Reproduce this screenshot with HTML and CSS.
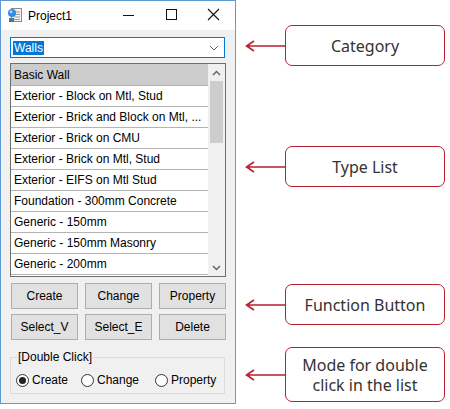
FILE: index.html
```html
<!DOCTYPE html>
<html lang="en">
<head>
  <meta charset="UTF-8">
  <title>Project1 - Type Manager</title>
  <link rel="stylesheet" href="styles.css">
</head>
<body>
  <div class="page">
    <!-- Dialog window -->
    <div class="window">
      <div class="titlebar">
        <svg class="app-icon" width="16" height="16" viewBox="0 0 16 16">
          <rect x="4.5" y="1.5" width="10" height="13" fill="#f4f4f4" stroke="#8a8a8a"/>
          <path d="M7 5h6M7 7.5h6M7 10h6M7 12.5h6" stroke="#9a9a9a"/>
          <circle cx="5" cy="6" r="4" fill="#2f8be0"/>
          <circle cx="4" cy="4.8" r="1.6" fill="#9fd3ff"/>
          <path d="M2 11h5v4H2z" fill="#5b6f86"/>
        </svg>
        <span class="title">Project1</span>
        <div class="caption">
          <svg width="46" height="29" viewBox="0 0 46 29"><path d="M18 15.5h11" stroke="#111"/></svg>
          <svg width="42" height="29" viewBox="0 0 42 29"><rect x="15.5" y="9.5" width="10" height="10" fill="none" stroke="#111"/></svg>
          <svg width="42" height="29" viewBox="0 0 42 29"><path d="M15 9l11 11M26 9L15 20" stroke="#111" stroke-width="1.1"/></svg>
        </div>
      </div>

      <div class="client">
        <div class="combo">
          <span class="combo-value">Walls</span>
          <svg class="chevron" width="10" height="6" viewBox="0 0 10 6"><path d="M1 1l4 4 4-4" fill="none" stroke="#606060"/></svg>
        </div>

        <div class="listbox">
          <ul class="items">
            <li class="item selected">Basic Wall</li>
            <li class="item">Exterior - Block on Mtl, Stud</li>
            <li class="item">Exterior - Brick and Block on Mtl, ...</li>
            <li class="item">Exterior - Brick on CMU</li>
            <li class="item">Exterior - Brick on Mtl, Stud</li>
            <li class="item">Exterior - EIFS on Mtl Stud</li>
            <li class="item">Foundation - 300mm Concrete</li>
            <li class="item">Generic - 150mm</li>
            <li class="item">Generic - 150mm Masonry</li>
            <li class="item">Generic - 200mm</li>
          </ul>
          <div class="scrollbar">
            <div class="arrow">
              <svg width="9" height="6" viewBox="0 0 9 6"><path d="M1 5l3.5-3.5L8 5" fill="none" stroke="#606060" stroke-width="1.4"/></svg>
            </div>
            <div class="track"><div class="thumb"></div></div>
            <div class="arrow">
              <svg width="9" height="6" viewBox="0 0 9 6"><path d="M1 1l3.5 3.5L8 1" fill="none" stroke="#606060" stroke-width="1.4"/></svg>
            </div>
          </div>
        </div>

        <div class="buttons">
          <button class="btn">Create</button>
          <button class="btn">Change</button>
          <button class="btn">Property</button>
          <button class="btn">Select_V</button>
          <button class="btn">Select_E</button>
          <button class="btn">Delete</button>
        </div>

        <fieldset class="group">
          <legend>[Double Click]</legend>
          <div class="radios">
            <label class="radio"><span class="dot checked"></span>Create</label>
            <label class="radio"><span class="dot"></span>Change</label>
            <label class="radio"><span class="dot"></span>Property</label>
          </div>
        </fieldset>
      </div>
    </div>

    <!-- Callouts -->
    <div class="notes">
      <div class="note note-category">
        <svg class="pointer" width="40" height="14" viewBox="0 0 40 14"><path d="M1 7h39M9 2L1.5 7 9 12" fill="none" stroke="#b8202e" stroke-width="1.6"/></svg>
        <div class="note-box">Category</div>
      </div>
      <div class="note note-types">
        <svg class="pointer" width="40" height="14" viewBox="0 0 40 14"><path d="M1 7h39M9 2L1.5 7 9 12" fill="none" stroke="#b8202e" stroke-width="1.6"/></svg>
        <div class="note-box">Type List</div>
      </div>
      <div class="note note-buttons">
        <svg class="pointer" width="40" height="14" viewBox="0 0 40 14"><path d="M1 7h39M9 2L1.5 7 9 12" fill="none" stroke="#b8202e" stroke-width="1.6"/></svg>
        <div class="note-box">Function Button</div>
      </div>
      <div class="note note-mode">
        <svg class="pointer" width="40" height="14" viewBox="0 0 40 14"><path d="M1 7h39M9 2L1.5 7 9 12" fill="none" stroke="#b8202e" stroke-width="1.6"/></svg>
        <div class="note-box">Mode for double<br>click in the list</div>
      </div>
    </div>
  </div>
</body>
</html>
```

FILE: styles.css
```css
body {
  margin: 0;
  background: #fff;
  font-family: "Liberation Sans", Arial, sans-serif;
  font-size: 12px;
  color: #000;
}
.page {
  display: flex;
  width: 450px;
  height: 409px;
  overflow: hidden;
}

/* window frame */
.window {
  width: 234px;
  height: 402px;
  border: 1px solid #5d9ad8;
  background: #f0f0f0;
  display: flex;
  flex-direction: column;
}
.titlebar {
  height: 29px;
  background: #fff;
  display: flex;
  align-items: center;
}
.app-icon {
  margin-left: 6px;
  margin-top: -1px;
}
.title {
  margin-left: 5px;
  font-size: 12px;
  color: #000;
}
.caption {
  margin-left: auto;
  display: flex;
  margin-top: -2px;
}
.caption svg {
  display: block;
}
.client {
  padding: 7px 9px 0 9px;
}

/* combo box */
.combo {
  width: 213px;
  height: 19px;
  border: 1px solid #0078d7;
  background: #fff;
  display: flex;
  align-items: center;
}
.combo-value {
  margin-left: 2px;
  padding: 0 1px;
  line-height: 14px;
  background: #0078d7;
  color: #fff;
}
.chevron {
  margin-left: auto;
  margin-right: 5px;
}

/* list box */
.listbox {
  margin-top: 5px;
  width: 214px;
  height: 212px;
  border: 1px solid #6e6e6e;
  background: #fff;
  display: flex;
}
.items {
  list-style: none;
  margin: 0;
  padding: 0;
  width: 197px;
}
.item {
  height: 20px;
  line-height: 20px;
  padding-left: 3px;
  border-bottom: 1px solid #b4b4b4;
  white-space: nowrap;
  overflow: hidden;
}
.item.selected {
  height: 21px;
  line-height: 22px;
  background: #cccccc;
}
.scrollbar {
  width: 17px;
  background: #f0f0f0;
  display: flex;
  flex-direction: column;
}
.arrow {
  height: 17px;
  display: flex;
  align-items: center;
  justify-content: center;
}
.track {
  flex: 1;
  padding: 0 2px;
}
.thumb {
  margin-top: 0;
  height: 62px;
  background: #cdcdcd;
}

/* command buttons */
.buttons {
  margin-top: 6px;
  display: grid;
  grid-template-columns: 67px 67px 67px;
  column-gap: 7px;
  row-gap: 5px;
  padding-left: 1px;
}
.btn {
  height: 26px;
  margin: 0;
  padding: 0;
  border: 1px solid #adadad;
  background: #e1e1e1;
  font-family: "Liberation Sans", Arial, sans-serif;
  font-size: 12px;
  color: #000;
}

/* double click mode */
.group {
  margin: 10px 0 0 0;
  padding: 0 5px 6px 5px;
  width: 203px;
  border: 1px solid #dcdcdc;
}
.group legend {
  padding: 0 1px;
  margin-left: 1px;
  font-size: 12px;
}
.radios {
  display: grid;
  grid-template-columns: 65px 74px auto;
  padding-top: 9px;
}
.radio {
  display: flex;
  align-items: center;
}
.dot {
  width: 11px;
  height: 11px;
  border: 1px solid #333;
  border-radius: 50%;
  background: #fff;
  margin-right: 3px;
  position: relative;
}
.dot.checked::after {
  content: "";
  position: absolute;
  left: 2px;
  top: 2px;
  width: 7px;
  height: 7px;
  border-radius: 50%;
  background: #222;
}

/* callouts */
.notes {
  display: flex;
  flex-direction: column;
  margin-left: 9px;
  padding-top: 25px;
}
.note {
  display: flex;
  align-items: center;
}
.pointer {
  display: block;
}
.note-box {
  width: 158px;
  height: 39px;
  border: 1.6px solid #b8202e;
  border-radius: 7px;
  background: #fff;
  display: flex;
  align-items: center;
  justify-content: center;
  text-align: center;
  font-family: "Noto Sans", "Open Sans", sans-serif;
  font-size: 16px;
  line-height: 20px;
  color: #333;
}
.note-types {
  margin-top: 80px;
}
.note-buttons {
  margin-top: 97px;
}
.note-mode {
  margin-top: 22px;
}
.note-mode .note-box {
  height: 53px;
}
```
